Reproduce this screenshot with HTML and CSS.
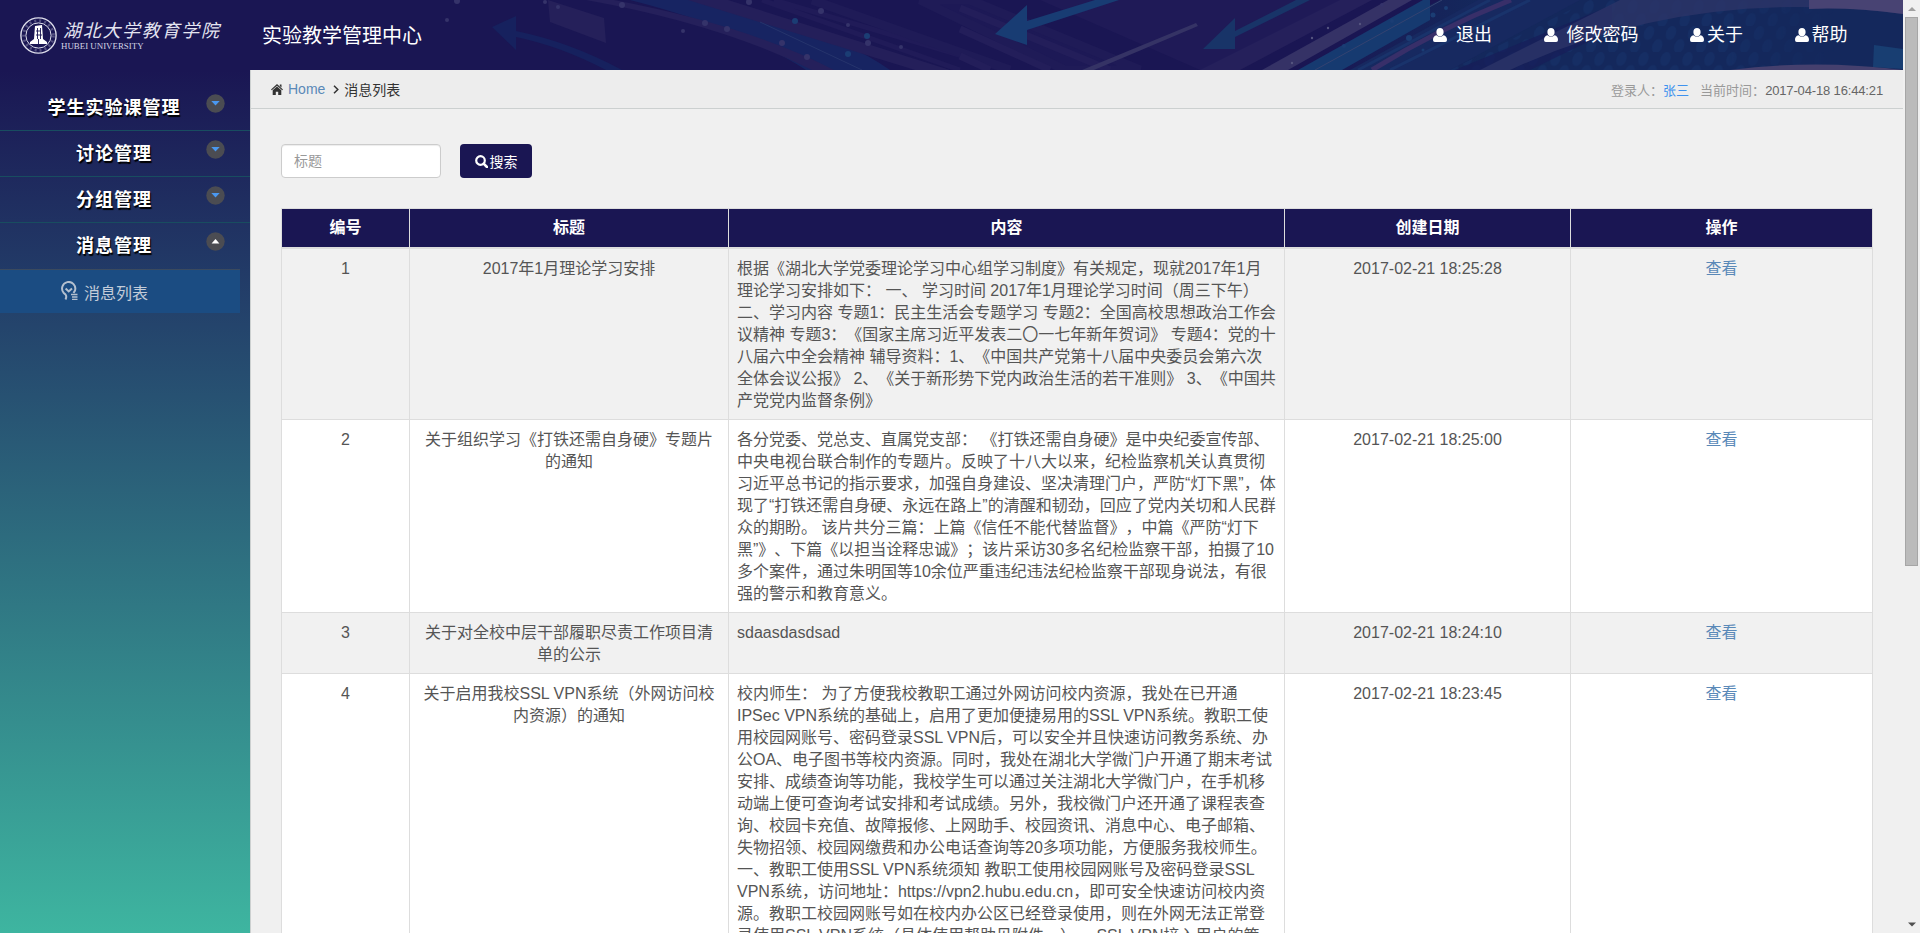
FILE: index.html
```html
<!DOCTYPE html>
<html lang="zh-CN">
<head>
<meta charset="utf-8">
<title>实验教学管理中心</title>
<link rel="stylesheet" href="styles.css">
</head>
<body>
<svg class="defs" width="0" height="0">
  <symbol id="user" viewBox="0 0 14 14"><path d="M7 0C9.200 0 10.600 1.600 10.600 4C10.600 5.600 10 7 9 7.700Q7 9 5 7.700C4 7 3.400 5.600 3.400 4C3.400 1.600 4.800 0 7 0ZM3.600 7.200Q7 10.400 10.400 7.200C13 7.600 14 9.600 14 12Q14 14 12.200 14H1.800Q0 14 0 12C0 9.600 1 7.600 3.600 7.200Z" fill="#fff"/></symbol>
  <symbol id="caret" viewBox="0 0 19 19"><circle cx="9.500" cy="9.500" r="9.200" fill="#4b4c52"/><path d="M5.300 7h8.400L9.500 11.400Z" fill="#4a98f0"/></symbol>
</svg>
<div class="app">
  <div class="page">
    <header class="header">
      <svg class="banner" width="1903" height="70" viewBox="0 0 1903 70">
        <defs>
          <linearGradient id="fade"><stop offset="0" stop-color="#14285c" stop-opacity="0"/><stop offset=".3" stop-color="#14285c"/></linearGradient>
          <pattern id="dots" width="22" height="26" patternUnits="userSpaceOnUse" patternTransform="skewX(-12)"><ellipse cx="6" cy="7" rx="5" ry="7" fill="#18356d"/><ellipse cx="17" cy="20" rx="5" ry="7" fill="#18356d"/></pattern>
          <linearGradient id="dotfade"><stop offset="0" stop-color="#fff"/><stop offset=".6" stop-color="#fff"/><stop offset=".85" stop-color="#000"/></linearGradient>
          <mask id="dotmask"><rect x="1450" width="453" height="70" fill="url(#dotfade)"/></mask>
        </defs>
        <path d="M1300 70L1440 0H1903V70Z" fill="url(#fade)"/>
        <path d="M548 0L604 18L606 43L550 22Z" fill="#25205a"/>
        <path d="M492 27L516 16V31Q570 42 622 70H606Q560 46 516 37V50Z" fill="#16215e"/>
        <path d="M630 0H720Q840 34 890 70H806Q740 28 630 0Z" fill="#172462"/>
        <path d="M586 0H614Q750 26 834 70H812Q720 24 586 0Z" fill="#25205b"/>
        <path d="M688 0H728L950 70H915Z" fill="#241f5a"/>
        <path d="M762 0L960 70M774 0L1010 70" stroke="#201b58" stroke-width="5"/>
        <path d="M812 0L1010 70M920 0L1065 70H1140L970 0Z" stroke="#1f1b57" stroke-width="9" fill="#1d1956"/>
        <path d="M960 8L1110 70M960 29L1050 70M960 56L990 70" stroke="#231e5a" stroke-width="7"/>
        <path d="M1040 0L1200 70H1204L1372 0Z" fill="#1f1a57"/>
        <path d="M760 22L862 70" stroke="#26346c" stroke-width="1"/>
        <path d="M995 34L1027 5V21L1095 0H1119L1027 30V45Z" fill="#183c73"/>
        <path d="M1082 70L1196 23L1198 26L1094 70Z" fill="#353365"/>
        <path d="M1203 49L1235 18V31L1296 0H1310L1235 37V49Z" fill="#183468"/>
        <path d="M1200 70L1340 0H1372L1240 70Z" fill="#25205b"/>
        <path d="M1262 70L1388 0H1412L1288 70Z" fill="#353266"/>
        <path d="M1298 70L1423 0H1430V20L1342 70Z" fill="#163a70"/>
        <path d="M1315 70L1442 0" stroke="#344371" stroke-width="1"/>
        <path d="M1350 70L1478 0H1580L1450 70Z" fill="#172960"/>
        <path d="M1372 70Q1440 28 1511 0" stroke="#382f69" stroke-width="5" fill="none"/>
        <path d="M1358 70L1490 0M1390 70L1530 0" stroke="#19336b" stroke-width="3"/>
        <path d="M1450 70L1590 0H1903V70Z" fill="url(#dots)" mask="url(#dotmask)" opacity=".5"/>
        <path d="M1455 70L1612 5V30L1530 70Z" fill="#171d59" opacity=".7"/>
        <path d="M1510 70Q1690 -14 1903 14V0H1620Q1560 30 1480 70Z" fill="#2c3568" opacity=".8"/>
        <path d="M1809 0H1903V14Q1850 7 1809 9Z" fill="#484373"/>
        <path d="M1730 70Q1815 59 1903 70Z" fill="#45406e"/>
        <path d="M1874 45L1903 49V69L1873 67Z" fill="#183e72"/>
        <g fill="#35336a"><circle cx="457" cy="1" r="3"/><circle cx="447" cy="20" r="2"/><circle cx="545" cy="2" r="2"/><circle cx="558" cy="7" r="2"/><circle cx="622" cy="5" r="3"/><circle cx="749" cy="2" r="3"/><circle cx="821" cy="11" r="3"/><circle cx="705" cy="23" r="3"/><circle cx="727" cy="29" r="3"/><circle cx="782" cy="43" r="3"/><circle cx="807" cy="57" r="3"/><circle cx="848" cy="25" r="2"/><circle cx="868" cy="43" r="3"/><circle cx="901" cy="47" r="2"/><circle cx="683" cy="31" r="2"/><circle cx="1382" cy="5" r="2"/></g>
        <g fill="#1b3d74"><circle cx="795" cy="21" r="3"/><circle cx="867" cy="36" r="3"/><circle cx="848" cy="54" r="3"/><circle cx="1409" cy="38" r="3"/><circle cx="1433" cy="15" r="2.500"/><circle cx="1446" cy="8" r="2"/><circle cx="1392" cy="21" r="2"/><circle cx="1344" cy="46" r="2"/><circle cx="1423" cy="50" r="1.500"/></g>
        <g fill="#55547f"><circle cx="1312" cy="38" r="1.200"/><circle cx="1328" cy="28" r="1.200"/><circle cx="1292" cy="63" r="1.200"/><circle cx="1360" cy="24" r="1.200"/></g>
      </svg>
      <div class="brand">
        <svg class="seal" width="37" height="37" viewBox="0 0 37 37" fill="none" stroke="#dcdcea">
          <circle cx="18.500" cy="18.500" r="17.600" stroke-width="1.400"/>
          <circle cx="18.500" cy="18.500" r="14.800" stroke-width="3" stroke-dasharray="2 3" opacity=".3"/>
          <circle cx="18.500" cy="18.500" r="12.600" stroke-width="1"/>
          <path d="M15 9L22 8L23 22L27 25V27H10V25L14 22Z" fill="#fff" stroke="none"/>
          <path d="M17.500 11v11M20.500 11v11M16 14h5M16 18h6M18.500 22v5" stroke="#1a1653" stroke-width=".9"/>
        </svg>
        <div class="names"><div class="cn">湖北大学教育学院</div><div class="en">HUBEI UNIVERSITY</div></div>
      </div>
      <div class="title">实验教学管理中心</div>
      <nav class="nav">
        <a class="exit"><svg width="14" height="14"><use href="#user"/></svg>退出</a>
        <a class="pwd"><svg width="14" height="14"><use href="#user"/></svg>修改密码</a>
        <a class="about"><svg width="14" height="14"><use href="#user"/></svg>关于</a>
        <a class="help"><svg width="14" height="14"><use href="#user"/></svg>帮助</a>
      </nav>
    </header>
    <div class="main">
      <aside class="side">
        <div class="item"><span>学生实验课管理</span><svg width="19" height="19"><use href="#caret"/></svg></div>
        <div class="item"><span>讨论管理</span><svg width="19" height="19"><use href="#caret"/></svg></div>
        <div class="item"><span>分组管理</span><svg width="19" height="19"><use href="#caret"/></svg></div>
        <div class="item open"><span>消息管理</span><svg width="19" height="19" viewBox="0 0 19 19"><circle cx="9.500" cy="9.500" r="9.200" fill="#4b4c52"/><path d="M5.600 11.400h7.800L9.500 7Z" fill="#fff"/></svg></div>
        <div class="sub"><svg width="17" height="19" viewBox="0 0 17 19" fill="none" stroke="#b4c0cf" stroke-width="2"><path d="M4.500 18.500Q6 15.500 4.500 13.500L2.800 12A6.600 6.600 0 1 1 14 9.500L12.500 12"/><path d="M4.600 7.500L7.700 10.500L11 7.500"/><path d="M10 13.500h6.500M11 16h5.500M11 18.300h5.500" stroke-width="1.300"/></svg>消息列表</div>
      </aside>
      <section class="content">
        <div class="crumbs">
          <svg class="home" width="12" height="11" viewBox="0 0 12 11"><path d="M6 0L12 5.400L11.200 6.300L6 1.700L.8 6.300L0 5.400ZM8.800 .5h1.700v3L8.800 2ZM6 2.600L10.300 6.300V11H7.200V7.800H4.800V11H1.700V6.300Z" fill="#333"/></svg>
          <a>Home</a>
          <svg class="chev" width="6" height="9" viewBox="0 0 6 9"><path d="M1 .7L4.800 4.500L1 8.300" fill="none" stroke="#333" stroke-width="1.500"/></svg>
          <span>消息列表</span>
          <div class="login">登录人：<b>张三</b><span class="when">当前时间：</span><i>2017-04-18 16:44:21</i></div>
        </div>
        <div class="search">
          <input type="text" placeholder="标题">
          <button><svg width="13" height="13" viewBox="0 0 13 13" fill="none" stroke="#fff"><circle cx="5.500" cy="5.500" r="4.300" stroke-width="2.200"/><path d="M8.600 8.600L12 12" stroke-width="2.600" stroke-linecap="round"/></svg>搜索</button>
        </div>
        <table class="grid">
          <colgroup><col class="c1"><col class="c2"><col class="c3"><col class="c4"><col class="c5"></colgroup>
          <thead><tr><th>编号</th><th>标题</th><th>内容</th><th>创建日期</th><th>操作</th></tr></thead>
          <tbody>
            <tr class="odd"><td>1</td><td>2017年1月理论学习安排</td><td class="text">根据《湖北大学党委理论学习中心组学习制度》有关规定，现就2017年1月<br>理论学习安排如下： 一、 学习时间 2017年1月理论学习时间（周三下午）<br>二、学习内容 专题1：民主生活会专题学习 专题2：全国高校思想政治工作会<br>议精神 专题3：《国家主席习近平发表二〇一七年新年贺词》 专题4：党的十<br>八届六中全会精神 辅导资料：1、《中国共产党第十八届中央委员会第六次<br>全体会议公报》 2、《关于新形势下党内政治生活的若干准则》 3、《中国共<br>产党党内监督条例》</td><td>2017-02-21 18:25:28</td><td><a>查看</a></td></tr>
            <tr><td>2</td><td>关于组织学习《打铁还需自身硬》专题片<br>的通知</td><td class="text">各分党委、党总支、直属党支部： 《打铁还需自身硬》是中央纪委宣传部、<br>中央电视台联合制作的专题片。反映了十八大以来，纪检监察机关认真贯彻<br>习近平总书记的指示要求，加强自身建设、坚决清理门户，严防“灯下黑”，体<br>现了“打铁还需自身硬、永远在路上”的清醒和韧劲，回应了党内关切和人民群<br>众的期盼。 该片共分三篇：上篇《信任不能代替监督》，中篇《严防“灯下<br>黑”》、下篇《以担当诠释忠诚》；该片采访30多名纪检监察干部，拍摄了10<br>多个案件，通过朱明国等10余位严重违纪违法纪检监察干部现身说法，有很<br>强的警示和教育意义。</td><td>2017-02-21 18:25:00</td><td><a>查看</a></td></tr>
            <tr class="odd"><td>3</td><td>关于对全校中层干部履职尽责工作项目清<br>单的公示</td><td class="text">sdaasdasdsad</td><td>2017-02-21 18:24:10</td><td><a>查看</a></td></tr>
            <tr><td>4</td><td>关于启用我校SSL VPN系统（外网访问校<br>内资源）的通知</td><td class="text">校内师生： 为了方便我校教职工通过外网访问校内资源，我处在已开通<br>IPSec VPN系统的基础上，启用了更加便捷易用的SSL VPN系统。教职工使<br>用校园网账号、密码登录SSL VPN后，可以安全并且快速访问教务系统、办<br>公OA、电子图书等校内资源。同时，我处在湖北大学微门户开通了期末考试<br>安排、成绩查询等功能，我校学生可以通过关注湖北大学微门户，在手机移<br>动端上便可查询考试安排和考试成绩。另外，我校微门户还开通了课程表查<br>询、校园卡充值、故障报修、上网助手、校园资讯、消息中心、电子邮箱、<br>失物招领、校园网缴费和办公电话查询等20多项功能，方便服务我校师生。<br>一、教职工使用SSL VPN系统须知 教职工使用校园网账号及密码登录SSL<br>VPN系统，访问地址：https://vpn2.hubu.edu.cn，即可安全快速访问校内资<br>源。教职工校园网账号如在校内办公区已经登录使用，则在外网无法正常登<br>录使用SSL VPN系统（具体使用帮助见附件一）。 SSL VPN接入用户的策</td><td>2017-02-21 18:23:45</td><td><a>查看</a></td></tr>
          </tbody>
        </table>
      </section>
    </div>
  </div>
  <div class="scroll">
    <svg width="17" height="17" viewBox="0 0 17 17"><path d="M5 11L9 7L13 11Z" fill="#a0a0a0"/></svg>
    <div class="thumb"></div>
    <svg class="down" width="17" height="17" viewBox="0 0 17 17"><path d="M5 6.500L9 10.500L13 6.500Z" fill="#505050"/></svg>
  </div>
</div>
</body>
</html>
```
FILE: styles.css
```css
* { box-sizing: border-box; }
body {
  margin: 0;
  height: 933px;
  overflow: hidden;
  font-family: "Liberation Sans", "Noto Sans CJK SC", sans-serif;
  text-spacing-trim: space-all;
  white-space: nowrap;
  color: #555;
  background: #f0f0f0;
}
.defs { display: none; }
svg { display: block; flex: none; }
.app { display: flex; height: 933px; }
.page { width: 1903px; display: flex; flex-direction: column; overflow: hidden; }

.header { position: relative; height: 70px; flex: none; display: flex; background: #1a1653; color: #fff; }
.banner { position: absolute; left: 0; top: 0; }
.brand { position: relative; width: 262px; padding: 17px 0 0 20px; display: flex; gap: 4px; }
.cn { margin: 0 0 0 2px; font: italic 18px/24px "Noto Sans CJK SC", sans-serif; letter-spacing: 1.7px; color: #e4e4f0; }
.en { font: 8.900px/10px "Liberation Serif", serif; color: #d4d4e4; }
.title { position: relative; font-size: 20px; line-height: 73px; }
.nav { position: relative; margin-left: auto; display: flex; padding: 0 55.500px 0 0; font-size: 18px; line-height: 69px; }
.nav a { display: flex; align-items: center; margin-left: 51.500px; gap: 3px; }
.nav .exit, .nav .pwd { gap: 9px; }

.main { display: flex; flex: 1; min-height: 0; }
.side { width: 250px; flex: none; padding-top: 15px; background: linear-gradient(#1a1653, #23406a 27%, #3eb5a0); }
.item { height: 46px; display: flex; border-bottom: 1px solid #184d60; }
.item span { width: 228px; text-align: center; font-size: 18px; font-weight: bold; letter-spacing: 1px; line-height: 47px; color: #fff; text-shadow: 1px 2px 1px #000; }
.item svg { margin: 9px 0 0 -22px; }
.item.open { border-bottom-color: transparent; }
.sub { width: 240px; height: 44px; display: flex; align-items: center; gap: 6px; padding: 0 0 0 61px; background: #1b4c82; border-top: 1px solid #3b4a5e; font-size: 16px; color: #c3ccd9; }
.sub svg { margin-top: -3px; }

.content { flex: 1; min-width: 0; border-left: 1px solid #ccd0d0; background: #f0f0f0; }
.crumbs { display: flex; align-items: center; height: 39px; padding: 0 20px; border-bottom: 1px solid #ccd0d0; background: #ededed; font-size: 14px; color: #333; }
.crumbs a { margin-left: 5px; color: #5a89b8; }
.chev { margin: 0 5px 0 8px; }
.login { margin-left: auto; font-size: 13px; color: #999; }
.login b { font-weight: normal; color: #3f92ee; }
.login i { font-style: normal; color: #666; letter-spacing: -.15px; }
.when { margin-left: 11px; }

.search { display: flex; gap: 19px; padding: 35px 0 0 30px; }
.search input { width: 160px; height: 34px; padding: 0 12px; border: 1px solid #ccc; border-radius: 4px; background: #fff; font: 14px "Liberation Sans", "Noto Sans CJK SC", sans-serif; box-shadow: inset 0 1px 1px rgba(0, 0, 0, .075); }
.search input::placeholder { color: #999; }
.search button { width: 72px; height: 34px; padding: 0; display: flex; align-items: center; justify-content: center; gap: 2px; border: 0; border-radius: 4px; background: #1a1653; color: #fff; font: 14px "Liberation Sans", "Noto Sans CJK SC", sans-serif; }

.grid { width: 1592px; margin: 30px 0 0 30px; table-layout: fixed; border-collapse: separate; border-spacing: 0; border: solid #ddd; border-width: 1px 0 0 1px; font-size: 16px; line-height: 22px; }
.c1 { width: 128px; }
.c2 { width: 319px; }
.c3 { width: 556px; }
.c4 { width: 286px; }
.c5 { width: 302px; }
.grid th { height: 40px; padding: 0; border: solid #ddd; border-width: 0 1px 2px 0; background: #1a1653; color: #fff; }
.grid td { padding: 9px 0 7px; vertical-align: top; text-align: center; border: solid #ddd; border-width: 0 1px 1px 0; background: #fff; }
.grid .odd td { background: #f1f1f1; }
.grid td.text { padding-left: 8px; text-align: left; }
.grid a { color: #5a89b8; }

.scroll { width: 17px; flex: none; display: flex; flex-direction: column; background: #f0f0f0; }
.thumb { width: 13px; height: 549px; margin-left: 2px; border: 1px solid #a6a6a6; background: #bbb; }
.down { margin-top: auto; }
```
